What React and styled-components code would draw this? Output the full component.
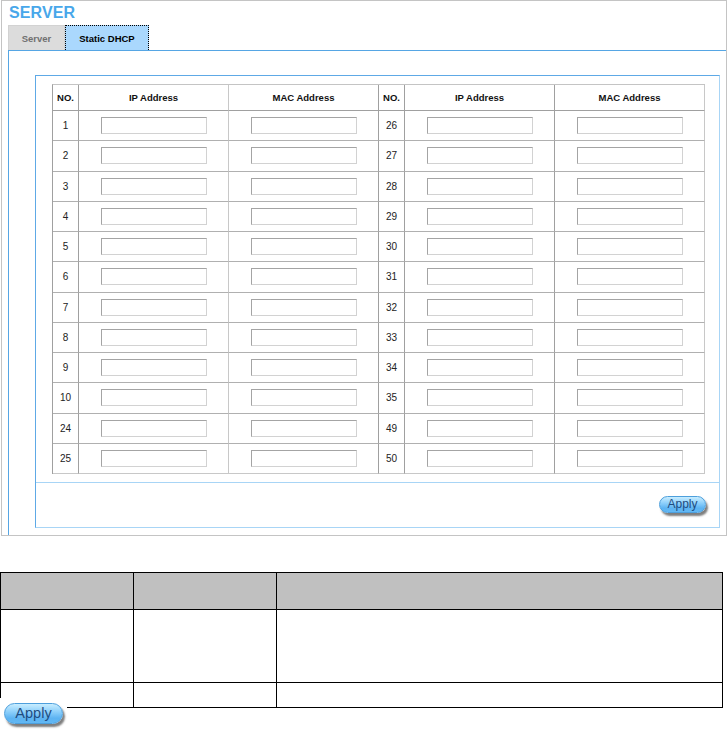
import styled, { createGlobalStyle } from 'styled-components'

const GlobalStyle = createGlobalStyle`
  html, body {
    margin: 0;
    padding: 0;
    background: #fff;
    font-family: "Liberation Sans", Arial, sans-serif;
  }
`

const Page = styled.div`
  width: 727px;
`

const Frame = styled.div`
  margin-left: 1px;
  width: 726px;
  height: 536px;
  box-sizing: border-box;
  border: 1px solid #c4c4c4;
  display: flex;
  flex-direction: column;
`

const Title = styled.div`
  margin-left: 7px;
  height: 24px;
  line-height: 24px;
  font-size: 16px;
  font-weight: bold;
  color: #48a7ea;
  letter-spacing: 0.1px;
`

const Tabs = styled.div`
  display: flex;
  margin-left: 6px;
  height: 25px;
`

const Tab = styled.div`
  box-sizing: border-box;
  width: ${p => p.$w}px;
  height: 25px;
  display: flex;
  align-items: center;
  justify-content: center;
  font-size: 9.5px;
  font-weight: bold;
  color: ${p => (p.$active ? '#000' : '#707070')};
  background: ${p => (p.$active ? '#aad8fd' : '#dcdcdc')};
  border: 1px ${p => (p.$active ? 'dotted #000' : 'solid #d2d2d2')};
  border-bottom: none;
`

const Panel = styled.div`
  flex: 1;
  margin-left: 6px;
  border-top: 1px solid #56a6e4;
  border-left: 1px solid #56a6e4;
  display: flex;
  flex-direction: column;
`

const Box = styled.div`
  flex: 1;
  margin: 24px 6px 7px 26px;
  border: 1px solid #a8d5f6;
  border-top-color: #5ea9e6;
  border-left-color: #5ea9e6;
  display: flex;
  flex-direction: column;
`

const Grid = styled.table`
  margin: 8px 0 8px 16px;
  border-collapse: separate;
  border-spacing: 0;
  table-layout: fixed;
  width: 653px;
  border-top: 1px solid #c4c4c4;
  border-left: 1px solid #a0a0a0;
`

const Th = styled.th`
  box-sizing: border-box;
  width: ${p => p.$w}px;
  height: 26px;
  padding: 0;
  font-size: 9.5px;
  font-weight: bold;
  color: #111;
  text-align: center;
  border-right: 1px solid ${p => (p.$dark ? '#a0a0a0' : '#c8c8c8')};
  border-bottom: 1px solid #a0a0a0;
`

const Td = styled.td`
  box-sizing: border-box;
  height: 30.25px;
  padding: 0;
  font-size: 10px;
  color: #222;
  text-align: center;
  vertical-align: middle;
  border-right: 1px solid ${p => (p.$dark ? '#a0a0a0' : '#c8c8c8')};
  border-bottom: 1px solid ${p => (p.$last ? '#c8c8c8' : '#b0b0b0')};
`

const Field = styled.input`
  box-sizing: border-box;
  display: block;
  margin: 0 auto;
  width: 106px;
  height: 17px;
  padding: 0;
  border: 1px solid #d2d2d2;
  border-top-color: #a4a4a4;
  border-left-color: #a4a4a4;
  background: #fff;
  outline: none;
`

const Footer = styled.div`
  flex: 1;
  border-top: 1px solid #a8d5f6;
  display: flex;
  justify-content: flex-end;
  align-items: flex-start;
  padding: 13px 13px 0 0;
`

const ApplyButton = styled.button`
  box-sizing: border-box;
  width: ${p => (p.$big ? 59 : 47)}px;
  height: ${p => (p.$big ? 21 : 17)}px;
  padding: 0 0 1px;
  border: 1px solid #4d9fdc;
  border-radius: 999px;
  background: linear-gradient(#c8edff 0%, #8ed0fb 40%, #5cb3f2 75%, #62b8f4 100%);
  box-shadow: 2px 3px 2px rgba(40, 40, 40, 0.6);
  color: #1f4c80;
  font-family: "Liberation Sans", Arial, sans-serif;
  font-size: ${p => (p.$big ? 14.5 : 12)}px;
  line-height: 1;
  cursor: pointer;
`

const Doc = styled.table`
  margin-top: 36px;
  border-collapse: separate;
  border-spacing: 0;
  table-layout: fixed;
  width: 723px;
  border-top: 1px solid #000;
  border-left: 1px solid #000;
`

const DocCell = styled.td`
  box-sizing: border-box;
  width: ${p => p.$w}px;
  height: ${p => p.$h}px;
  padding: 0;
  background: ${p => (p.$head ? '#c0c0c0' : '#fff')};
  border-right: 1px solid #000;
  border-bottom: 1px solid #000;
`

const ApplyPatch = styled.div`
  position: relative;
  margin-top: -10px;
  width: 67px;
  height: 35px;
  background: #fff;
  padding: 5px 0 0 4px;
  box-sizing: border-box;
`

const cols = [
  { label: 'NO.', w: 26, dark: true },
  { label: 'IP Address', w: 150 },
  { label: 'MAC Address', w: 150, dark: true },
  { label: 'NO.', w: 26, dark: true },
  { label: 'IP Address', w: 150, dark: true },
  { label: 'MAC Address', w: 150 },
]

const left = [1, 2, 3, 4, 5, 6, 7, 8, 9, 10, 24, 25]
const right = [26, 27, 28, 29, 30, 31, 32, 33, 34, 35, 49, 50]

export default function App() {
  return (
    <Page>
      <GlobalStyle />
      <Frame>
        <Title>SERVER</Title>
        <Tabs>
          <Tab $w={57}>Server</Tab>
          <Tab $w={84} $active>Static DHCP</Tab>
        </Tabs>
        <Panel>
          <Box>
            <Grid>
              <thead>
                <tr>
                  {cols.map((c, i) => (
                    <Th key={i} $w={c.w} $dark={c.dark}>{c.label}</Th>
                  ))}
                </tr>
              </thead>
              <tbody>
                {left.map((n, i) => {
                  const last = i === left.length - 1
                  return (
                    <tr key={n}>
                      <Td $dark $last={last}>{n}</Td>
                      <Td $last={last}><Field /></Td>
                      <Td $dark $last={last}><Field /></Td>
                      <Td $dark $last={last}>{right[i]}</Td>
                      <Td $dark $last={last}><Field /></Td>
                      <Td $last={last}><Field /></Td>
                    </tr>
                  )
                })}
              </tbody>
            </Grid>
            <Footer>
              <ApplyButton>Apply</ApplyButton>
            </Footer>
          </Box>
        </Panel>
      </Frame>

      <Doc>
        <tbody>
          <tr>
            <DocCell $w={133} $h={37} $head />
            <DocCell $w={143} $h={37} $head />
            <DocCell $w={446} $h={37} $head />
          </tr>
          <tr>
            <DocCell $w={133} $h={73} />
            <DocCell $w={143} $h={73} />
            <DocCell $w={446} $h={73} />
          </tr>
          <tr>
            <DocCell $w={133} $h={25} />
            <DocCell $w={143} $h={25} />
            <DocCell $w={446} $h={25} />
          </tr>
        </tbody>
      </Doc>
      <ApplyPatch>
        <ApplyButton $big>Apply</ApplyButton>
      </ApplyPatch>
    </Page>
  )
}
